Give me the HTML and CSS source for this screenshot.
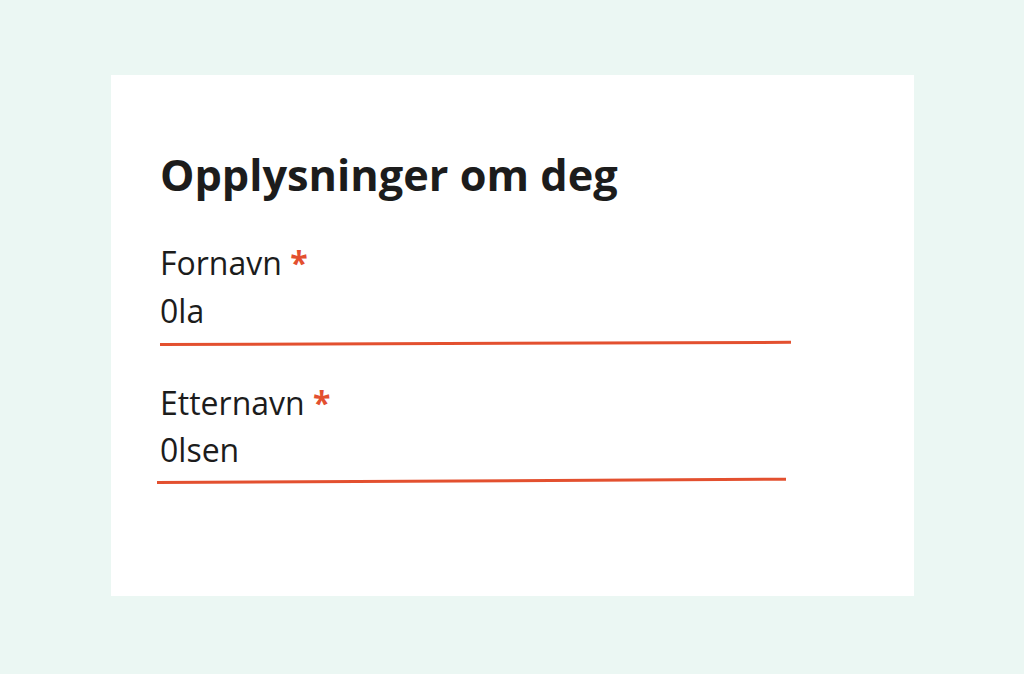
FILE: index.html
```html
<!DOCTYPE html>
<html lang="no">
<head>
<meta charset="utf-8">
<title>Opplysninger om deg</title>
<link rel="stylesheet" href="styles.css">
</head>
<body>
<main class="card">
  <h1 class="title">Opplysninger om deg</h1>
  <div class="field">
    <div class="label">Fornavn <span class="req">*</span></div>
    <div class="value">0la</div>
    <div class="line line-a"></div>
  </div>
  <div class="field field-b">
    <div class="label">Etternavn <span class="req">*</span></div>
    <div class="value">0lsen</div>
    <div class="line line-b"></div>
  </div>
</main>
</body>
</html>
```
FILE: styles.css
```css
html, body {
  margin: 0;
  padding: 0;
}
body {
  background: #ebf7f3;
  width: 1024px;
  height: 674px;
  overflow: hidden;
  font-family: "Open Sans", "Noto Sans", sans-serif;
  color: #1c1c1c;
  padding-top: 75px;
  box-sizing: border-box;
}
.card {
  margin-left: 111px;
  width: 803px;
  height: 521px;
  background: #ffffff;
  box-sizing: border-box;
  padding: 70px 0 0 49px;
}
.title {
  margin: 0;
  font-size: 43.3px;
  font-weight: 700;
  line-height: 60px;
  letter-spacing: 0;
}
.field {
  margin-top: 36px;
}
.field-b {
  margin-top: 35px;
}
.label, .value {
  font-size: 32px;
  line-height: 44px;
}
.value {
  margin-top: 4px;
}
.field-b .value {
  margin-top: 3px;
}
.req {
  color: #e3502f;
  font-weight: 700;
}
.line {
  height: 3px;
  background: #e3502f;
  width: 631px;
  margin-top: 10px;
  transform-origin: left center;
}
.line-a {
  transform: rotate(-0.2deg);
}
.line-b {
  width: 629px;
  margin-top: 9px;
  margin-left: -3px;
  transform: rotate(-0.3deg);
}
```
